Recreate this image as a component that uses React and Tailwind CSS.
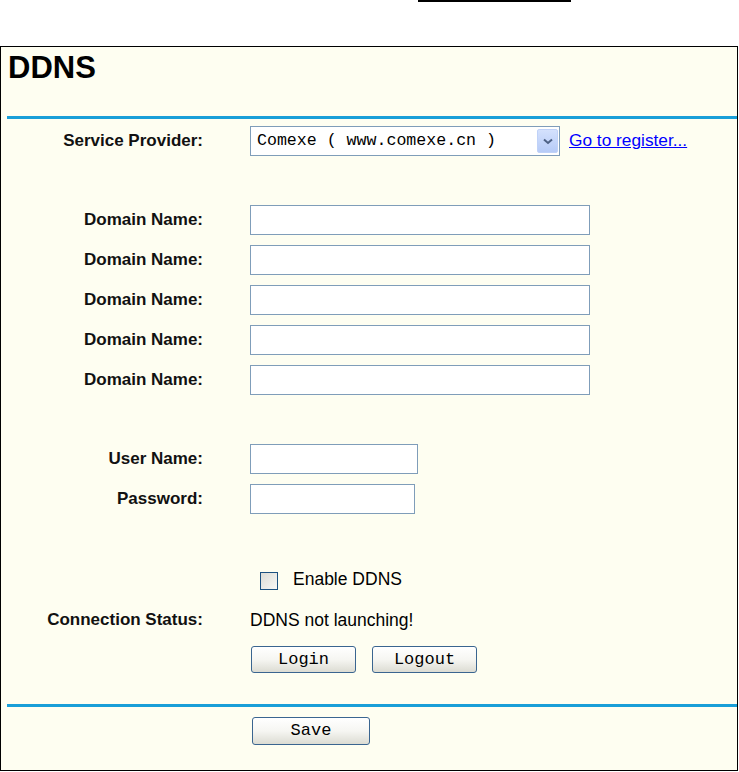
import React from "react";

const sans = "font-['Liberation_Sans',Arial,sans-serif]";
const mono = "font-['Liberation_Mono','Courier_New',monospace]";

// one label / value line of the form
function Row({ label, className, children }) {
  return (
    <div className={"flex items-center " + className}>
      <div className="w-[202px] shrink-0 text-right text-[17px] font-bold text-[#111]">
        {label}
      </div>
      <div className="ml-[47px] flex items-center">{children}</div>
    </div>
  );
}

function TextBox({ width }) {
  return (
    <input
      type="text"
      className={"h-[30px] border border-[#7f9db9] bg-white outline-none " + width}
    />
  );
}

function XpButton({ label, width }) {
  return (
    <button
      className={
        mono +
        " h-full rounded-[3px] border border-[#3a6590] bg-linear-to-b from-white via-[#f6f6f2] to-[#dcdcd3] text-[17px] text-black " +
        width
      }
    >
      {label}
    </button>
  );
}

export default function App() {
  return (
    <div className={sans + " bg-white text-black"}>
      {/* stray rule above the panel */}
      <div className="ml-[418px] h-[2px] w-[153px] bg-black" />

      <div className="mt-[44px] w-[738px] border border-black bg-[#fefef1]">
        {/* TITLE */}
        <div className="h-[69px] pl-[7px] pt-[5px]">
          <h1 className="text-[31px] leading-[31px] font-bold">DDNS</h1>
        </div>
        <div className="ml-[6px] h-[3px] bg-[#1a9fd8]" />

        {/* PROVIDER */}
        <Row label="Service Provider:" className="mt-[7px] h-[30px]">
          <div className="relative flex h-[30px] w-[310px] items-center border border-[#7f9db9] bg-white">
            <span className={mono + " pl-[6px] text-[16.6px] whitespace-pre"}>
              Comexe ( www.comexe.cn )
            </span>
            <div className="absolute top-[2px] right-[1px] flex h-[24px] w-[21px] items-center justify-center rounded-[2px] border border-[#c0d2f8] bg-linear-to-b from-[#d4e1fd] to-[#b6cbf7]">
              <svg width="10" height="7" viewBox="0 0 10 7">
                <path d="M1 1.5 L5 5 L9 1.5" fill="none" stroke="#4d6185" strokeWidth="2" />
              </svg>
            </div>
          </div>
          <a href="#" className="ml-[9px] text-[17.3px] text-[#0000ff] underline">
            Go to register...
          </a>
        </Row>

        {/* DOMAINS */}
        <Row label="Domain Name:" className="mt-[49px] h-[30px]">
          <TextBox width="w-[340px]" />
        </Row>
        <Row label="Domain Name:" className="mt-[10px] h-[30px]">
          <TextBox width="w-[340px]" />
        </Row>
        <Row label="Domain Name:" className="mt-[10px] h-[30px]">
          <TextBox width="w-[340px]" />
        </Row>
        <Row label="Domain Name:" className="mt-[10px] h-[30px]">
          <TextBox width="w-[340px]" />
        </Row>
        <Row label="Domain Name:" className="mt-[10px] h-[30px]">
          <TextBox width="w-[340px]" />
        </Row>

        {/* ACCOUNT */}
        <Row label="User Name:" className="mt-[49px] h-[30px]">
          <TextBox width="w-[168px]" />
        </Row>
        <Row label="Password:" className="mt-[10px] h-[30px]">
          <input
            type="password"
            className="h-[30px] w-[165px] border border-[#7f9db9] bg-white outline-none"
          />
        </Row>

        {/* ENABLE + STATUS */}
        <Row label="" className="mt-[52px] h-[30px]">
          <span className="ml-[10px] h-[18px] w-[18px] border border-[#1c5180] bg-linear-to-br from-[#dcdcd5] to-[#f8f8f6]" />
          <span className="ml-[15px] -mt-[4px] text-[17.5px]">Enable DDNS</span>
        </Row>
        <Row label="Connection Status:" className="mt-[9px] h-[30px]">
          <span className="text-[17.5px]">DDNS not launching!</span>
        </Row>
        <Row label="" className="mt-[11px] h-[27px]">
          <div className="ml-[1px] flex h-[27px] gap-[16px]">
            <XpButton label="Login" width="w-[105px]" />
            <XpButton label="Logout" width="w-[105px]" />
          </div>
        </Row>

        {/* SAVE */}
        <div className="mt-[31px] ml-[6px] h-[3px] bg-[#1a9fd8]" />
        <Row label="" className="mt-[10px] mb-[25px] h-[28px]">
          <div className="ml-[2px] h-[28px]">
            <XpButton label="Save" width="w-[118px]" />
          </div>
        </Row>
      </div>
    </div>
  );
}
